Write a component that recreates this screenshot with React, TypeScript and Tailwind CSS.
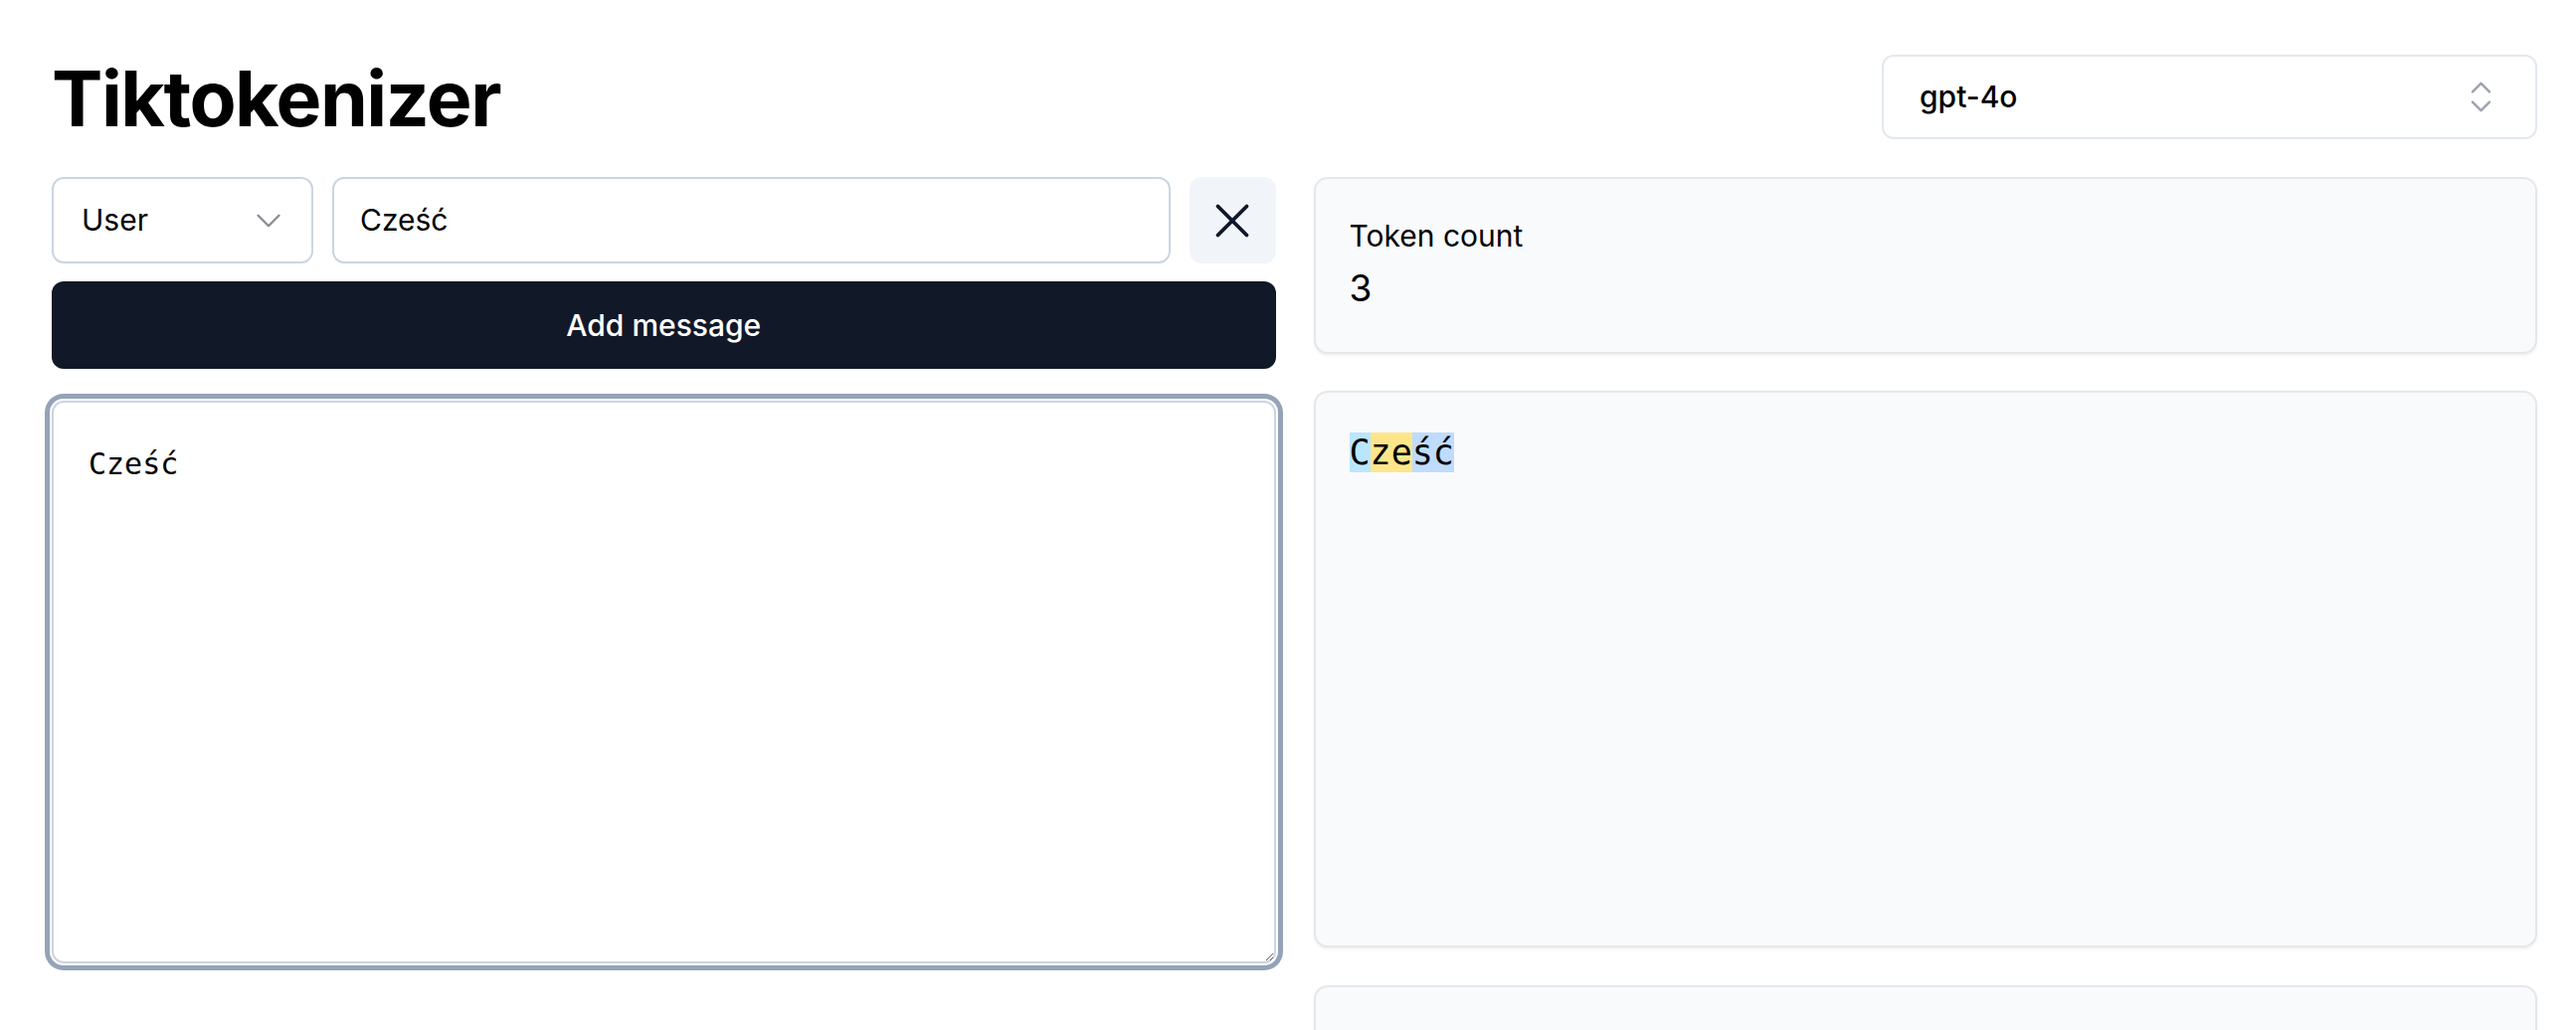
import React, { useEffect, useRef } from 'react';
import { ChevronDown, ChevronsUpDown, X } from 'lucide-react';

// token pieces shown in the viewer, with their highlight colours
const tokens = [
  { text: 'C', color: 'bg-[#bae6fd]' },
  { text: 'ze', color: 'bg-[#fde68a]' },
  { text: 'ść', color: 'bg-[#bfdbfe]' },
];

const App = () => {
  const areaRef = useRef<HTMLTextAreaElement>(null);

  useEffect(() => {
    const el = areaRef.current;
    if (el) {
      el.focus();
      el.setSelectionRange(el.value.length, el.value.length);
    }
  }, []);

  return (
    <div className="min-h-screen bg-white font-['Inter',sans-serif] text-black">
      <div className="flex w-[2551px] flex-col gap-[36px] pl-[52px] pt-[55px] pb-[40px]">
        <div className="flex items-start justify-between">
          <h1 className="mt-[2px] text-[77px] font-bold leading-[85px] tracking-[-1.5px]">Tiktokenizer</h1>
          <div className="flex h-[85px] w-[659px] items-center justify-between rounded-[12px] border-2 border-[#e2e8f0] bg-white pl-[36px] pr-[34px]">
            <span className="text-[30px] font-medium">gpt-4o</span>
            <ChevronsUpDown size={41} strokeWidth={1.4} className="text-[#9ca3af]" />
          </div>
        </div>

        <div className="grid grid-cols-2 gap-[38px]">
          <section className="flex flex-col">
            <div className="flex h-[87px] gap-[19px]">
              <div className="flex w-[263px] items-center justify-between rounded-[12px] border-2 border-[#cbd5e1] bg-white pl-[28px] pr-[22px]">
                <span className="text-[30px]">User</span>
                <ChevronDown size={42} strokeWidth={1.4} className="text-[#8b8f96]" />
              </div>
              <input
                readOnly
                value="Cześć"
                className="min-w-0 flex-1 rounded-[12px] border-2 border-[#cbd5e1] bg-white px-[26px] text-[30px] text-black outline-none"
              />
              <button className="flex w-[87px] items-center justify-center rounded-[12px] bg-[#f1f5f9]">
                <X size={58} strokeWidth={1.6} className="text-[#0f172a]" />
              </button>
            </div>
            <button className="mt-[18px] flex h-[88px] items-center justify-center rounded-[12px] bg-[#111827] text-[30px] font-medium text-white">
              Add message
            </button>
            <textarea
              ref={areaRef}
              defaultValue="Cześć"
              className="mt-[32px] h-[566px] w-full resize-y rounded-[12px] border-2 border-[#cbd5e1] bg-white px-[35px] pt-[40px] font-['DejaVu_Sans_Mono',monospace] text-[30px] leading-[43px] text-black caret-black shadow-[0_0_0_2px_#ffffff,0_0_0_7px_#94a3b8] outline-none"
            />
          </section>

          <section className="flex flex-col">
            <div className="flex h-[178px] flex-col rounded-[14px] border-2 border-[#e5e7eb] bg-[#f8fafc] px-[34px] pt-[36px] shadow-[0_2px_3px_rgba(0,0,0,0.06)]">
              <p className="text-[30px] leading-[43px]">Token count</p>
              <p className="mt-[2px] text-[37px] leading-[57px]">3</p>
            </div>
            <div className="mt-[37px] h-[560px] rounded-[14px] border-2 border-[#e5e7eb] bg-[#f8fafc] px-[34px] pt-[35px] shadow-[0_2px_3px_rgba(0,0,0,0.06)]">
              <pre className="font-['DejaVu_Sans_Mono',monospace] text-[35px] leading-[50px] text-black">
                {tokens.map((t, i) => (
                  <span key={i} className={t.color}>{t.text}</span>
                ))}
              </pre>
            </div>
            <div className="mt-[38px] h-[300px] rounded-[14px] border-2 border-[#e5e7eb] bg-[#f8fafc] shadow-[0_2px_3px_rgba(0,0,0,0.06)]" />
          </section>
        </div>
      </div>
    </div>
  );
};

export default App;
